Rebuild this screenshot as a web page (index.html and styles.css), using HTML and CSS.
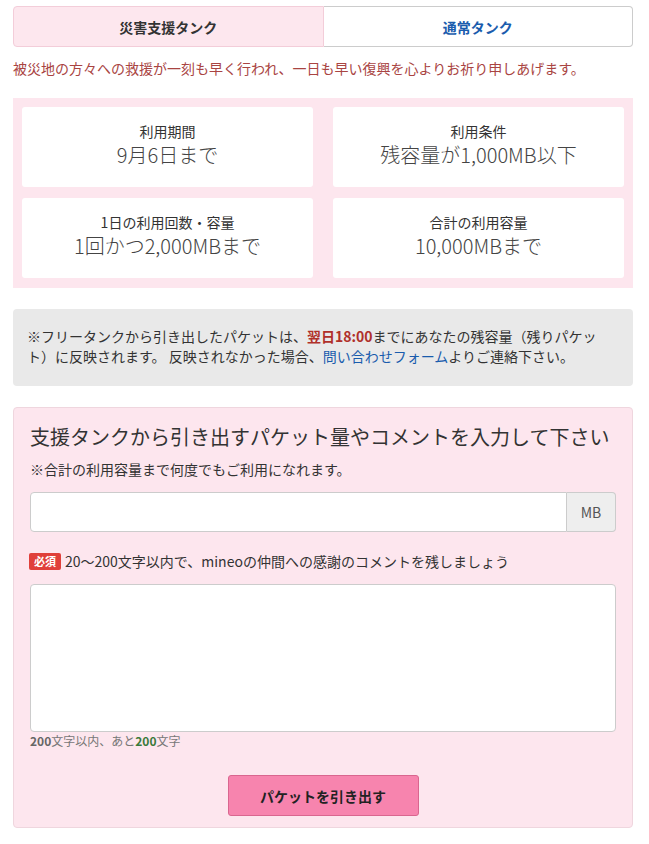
FILE: index.html
```html
<!DOCTYPE html>
<html lang="ja">
<head>
  <meta charset="UTF-8">
  <title>災害支援タンク</title>
  <meta name="viewport" content="width=device-width, initial-scale=1">
  <link rel="stylesheet" href="styles.css">
</head>
<body>
<div class="page">
  <div class="tabs">
    <div class="tab tab-active">災害支援タンク</div>
    <div class="tab tab-normal">通常タンク</div>
  </div>
  <p class="notice-red">被災地の方々への救援が一刻も早く行われ、一日も早い復興を心よりお祈り申しあげます。</p>

  <div class="info">
    <div class="info-card">
      <div class="info-label">利用期間</div>
      <div class="info-value">9月6日まで</div>
    </div>
    <div class="info-card">
      <div class="info-label">利用条件</div>
      <div class="info-value">残容量が1,000MB以下</div>
    </div>
    <div class="info-card">
      <div class="info-label">1日の利用回数・容量</div>
      <div class="info-value">1回かつ2,000MBまで</div>
    </div>
    <div class="info-card">
      <div class="info-label">合計の利用容量</div>
      <div class="info-value">10,000MBまで</div>
    </div>
  </div>

  <div class="gray-box">
    ※フリータンクから引き出したパケットは、<strong class="em-red">翌日18:00</strong>までにあなたの残容量（残りパケット）に反映されます。 反映されなかった場合、<a href="#" class="link">問い合わせフォーム</a>よりご連絡下さい。
  </div>

  <form class="form-box">
    <h2 class="form-title">支援タンクから引き出すパケット量やコメントを入力して下さい</h2>
    <p class="form-note">※合計の利用容量まで何度でもご利用になれます。</p>
    <div class="input-group">
      <input type="text" class="input">
      <span class="addon">MB</span>
    </div>
    <div class="label-row">
      <span class="badge">必須</span>
      <span>20〜200文字以内で、mineoの仲間への感謝のコメントを残しましょう</span>
    </div>
    <textarea class="textarea"></textarea>
    <div class="counter"><b>200</b>文字以内、あと<b class="green">200</b>文字</div>
    <div class="btn-row">
      <button type="button" class="submit-btn">パケットを引き出す</button>
    </div>
  </form>
</div>
</body>
</html>
```

FILE: styles.css
```css
html, body {
  margin: 0;
  padding: 0;
  background: #fff;
  color: #333;
  font-family: "Noto Sans CJK JP", "Noto Sans", sans-serif;
}
.page {
  width: 620px;
  padding: 6px 0 0 13px;
}
.tabs {
  display: flex;
  height: 41px;
}
.tab {
  flex: 1;
  display: flex;
  align-items: center;
  justify-content: center;
  font-size: 14px;
  font-weight: bold;
  box-sizing: border-box;
}
.tab-active {
  background: #fde7ee;
  border: 1px solid #f3cdd9;
  border-radius: 4px 0 0 4px;
  color: #333;
}
.tab-normal {
  background: #fff;
  border: 1px solid #ccc;
  border-left: none;
  border-radius: 0 4px 4px 0;
  color: #1a5cad;
}
.notice-red {
  margin: 10px 0 0;
  color: #a94442;
  font-size: 14px;
  line-height: 22px;
}
.info {
  margin-top: 19px;
  background: #fde6ee;
  padding: 9px 9px 10px;
  display: grid;
  grid-template-columns: 1fr 1fr;
  gap: 11px 20px;
}
.info-card {
  background: #fff;
  border-radius: 3px;
  height: 80px;
  box-sizing: border-box;
  padding-top: 14px;
  text-align: center;
}
.info-label {
  font-size: 14px;
  line-height: 20px;
  color: #333;
}
.info-value {
  font-size: 20px;
  line-height: 28px;
  font-weight: 300;
  color: #444;
}
.gray-box {
  margin-top: 21px;
  background: #e9e9e9;
  border-radius: 4px;
  padding: 17px 24px 20px 14px;
  font-size: 14px;
  line-height: 20px;
  color: #333;
}
.em-red { color: #b0302a; }
.link { color: #1a5cad; text-decoration: none; }
.form-box {
  margin: 21px 0 0;
  background: #fde6ee;
  border: 1px solid #efd6de;
  border-radius: 4px;
  padding: 15px 16px 11px;
}
.form-title {
  margin: 0;
  font-size: 20px;
  line-height: 28px;
  font-weight: normal;
  color: #333;
}
.form-note {
  margin: 8px 0 0;
  font-size: 14px;
  line-height: 20px;
}
.input-group {
  display: flex;
  margin-top: 13px;
  height: 40px;
}
.input {
  flex: 1;
  min-width: 0;
  box-sizing: border-box;
  border: 1px solid #ccc;
  border-radius: 4px 0 0 4px;
  background: #fff;
  font-size: 14px;
  padding: 0 10px;
  outline: none;
}
.addon {
  width: 49px;
  box-sizing: border-box;
  display: flex;
  align-items: center;
  justify-content: center;
  background: #eee;
  border: 1px solid #ccc;
  border-left: none;
  border-radius: 0 4px 4px 0;
  font-size: 14px;
  color: #555;
}
.label-row {
  display: flex;
  align-items: center;
  gap: 4px;
  margin-top: 19px;
  font-size: 14px;
  line-height: 20px;
}
.badge {
  background: #e0403a;
  color: #fff;
  font-size: 11px;
  font-weight: bold;
  line-height: 17px;
  padding: 0 5px;
  border-radius: 2px;
  margin-left: -1px;
}
.textarea {
  display: block;
  width: 100%;
  height: 148px;
  box-sizing: border-box;
  margin-top: 13px;
  border: 1px solid #ccc;
  border-radius: 4px;
  background: #fff;
  resize: none;
  outline: none;
  font-family: inherit;
}
.counter {
  font-size: 12px;
  line-height: 18px;
  color: #777;
}
.counter b { color: #666; }
.counter b.green { color: #3a7a3a; }
.btn-row {
  display: flex;
  justify-content: center;
  margin-top: 25px;
}
.submit-btn {
  width: 191px;
  height: 41px;
  background: #f784ae;
  border: 1px solid #d9668f;
  border-radius: 3px;
  color: #222;
  font-family: inherit;
  font-size: 14px;
  font-weight: bold;
  cursor: pointer;
}
```
